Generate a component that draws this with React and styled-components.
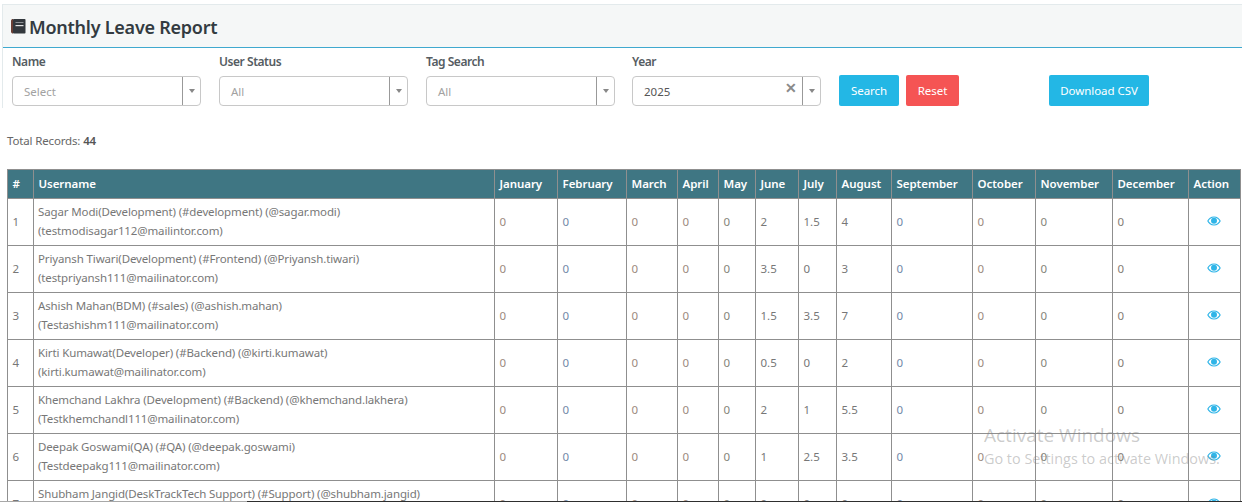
import React from 'react';
import styled, { createGlobalStyle } from 'styled-components';

const Global = createGlobalStyle`
  html, body { margin: 0; padding: 0; background: #fff; overflow: hidden; }
  body { font-family: "Noto Sans", "Open Sans", sans-serif; height: 502px; width: 1242px; }
`;
const Page = styled.div`position: relative; width: 1242px; height: 502px; overflow: hidden; padding-top: 4px; box-sizing: border-box;`;
const Panel = styled.section`margin-left: 2px; border-left: 1px solid #e3eaec; height: 104px;`;
const Heading = styled.header`
  height: 42px; box-sizing: content-box; display: flex; align-items: center; gap: 3px; padding: 0 0 0 7px;
  background: #f5f7f7; border-top: 1px solid #e3eaec; border-bottom: 1px solid #3fa9cf;
`;
const Title = styled.h1`margin: 2px 0 0; font-size: 18px; font-weight: 600; color: #333b41; letter-spacing: -.25px;`;
const Filters = styled.div`display: flex; padding: 5px 0 0 9px; align-items: flex-start;`;
const Field = styled.div`width: 189px; margin-right: ${p => p.$mr ?? 18}px; display: flex; flex-direction: column; gap: 6px;`;
const Label = styled.label`font-size: 12px; font-weight: 600; color: #555c62; line-height: 17px; letter-spacing: -.45px;`;
const SelectBox = styled.div`
  position: relative; height: 30px; border: 1px solid #c8c8c8; border-radius: 4px; box-sizing: border-box;
  display: flex; align-items: center; justify-content: space-between; background: #fff;
`;
const Value = styled.span`padding-left: ${p => p.$pl}px; font-size: 11.5px; color: ${p => p.$dark ? '#555' : '#a2a2a2'};`;
const Right = styled.div`display: flex; align-items: center; height: 100%;`;
const Clear = styled.span`font-size: 14px; color: #8a8a8a; font-weight: 700; line-height: 1; margin: -7px 5px 0 0;`;
const Caret = styled.span`
  width: 17px; height: 100%; border-left: 1px solid #999; display: flex; align-items: center; justify-content: center;
  &::after { content: ''; border: 3.5px solid transparent; border-top: 4px solid #888; border-bottom: 0; }
`;
const Button = styled.button`
  height: 31px; width: ${p => p.$w}px; margin: 22px ${p => p.$mr}px 0 0; border: 0; border-radius: 2px; padding: 0;
  background: ${p => p.$bg}; color: #fff; font: 11.5px "Noto Sans", sans-serif; letter-spacing: -.05px;
`;
const Total = styled.p`margin: 24px 0 0 7px; height: 17px; font-size: 11.5px; line-height: 17px; color: #666; letter-spacing: -.15px; b { font-weight: 600; color: #555; }`;
const Grid = styled.table`
  margin: 20px 0 0 6.5px; width: 1233.5px; border-collapse: collapse; table-layout: fixed; font-size: 11.5px;
  th, td { border: 1px solid #8f8f8f; padding: 0 0 0 5px; text-align: left; box-sizing: border-box; }
`;
const Head = styled.th`background: #3f7683; color: #fff; font-weight: 600; height: 29px; white-space: nowrap; overflow: hidden; letter-spacing: -.05px; && { padding-bottom: 2px; }`;
const Row = styled.tr`height: 47px;`;
const Cell = styled.td`color: ${p => p.$c || '#777'}; && { padding-bottom: 2px; }`;
const UserCell = styled.td`color: #777; line-height: 19px; white-space: nowrap; overflow: hidden; letter-spacing: -.13px; && { padding: 0 0 2px 4.5px; }`;
const ActionCell = styled.td`&& { padding: 0; text-align: center; } svg { display: block; margin: 0 auto; transform: translateY(-1px); }`;
const Watermark = styled.div`
  position: absolute; left: 984px; top: 423px; color: rgba(130,130,130,.42); font-family: "Open Sans", sans-serif; pointer-events: none;
`;
const WmTitle = styled.div`font-size: 19px; line-height: 25px;`;
const WmSub = styled.div`font-size: 14.4px; line-height: 21px; white-space: nowrap;`;
const EdgeLine = styled.div`
  position: absolute; left: 0; right: 0; bottom: 0; height: 1px;
  background: linear-gradient(to right, #a8a8a8 247px, #2e2e2e 247px);
`;

const months = ['January','February','March','April','May','June','July','August','September','October','November','December'];
const widths = [26,461,63,69,51,41,37,43,38,55,81,63,77,76,52.5];
const rows = [
  ['Sagar Modi(Development) (#development) (@sagar.modi)','(testmodisagar112@mailintor.com)',[0,0,0,0,0,2,1.5,4,0,0,0,0]],
  ['Priyansh Tiwari(Development) (#Frontend) (@Priyansh.tiwari)','(testpriyansh111@mailinator.com)',[0,0,0,0,0,3.5,0,3,0,0,0,0]],
  ['Ashish Mahan(BDM) (#sales) (@ashish.mahan)','(Testashishm111@mailinator.com)',[0,0,0,0,0,1.5,3.5,7,0,0,0,0]],
  ['Kirti Kumawat(Developer) (#Backend) (@kirti.kumawat)','(kirti.kumawat@mailinator.com)',[0,0,0,0,0,0.5,0,2,0,0,0,0]],
  ['Khemchand Lakhra (Development) (#Backend) (@khemchand.lakhera)','(Testkhemchandl111@mailinator.com)',[0,0,0,0,0,2,1,5.5,0,0,0,0]],
  ['Deepak Goswami(QA) (#QA) (@deepak.goswami)','(Testdeepakg111@mailinator.com)',[0,0,0,0,0,1,2.5,3.5,0,0,0,0]],
  ['Shubham Jangid(DeskTrackTech Support) (#Support) (@shubham.jangid)','(testshubham111@mailinator.com)',[0,0,0,0,0,0,0,0,0,0,0,0]],
];
const tint = ['#9c8a7e','#7389a8','#9c8a7e','#9c8a7e','#85857a','#777','#777','#777','#7389a8','#9c8a7e','#85857a','#857d75'];

const BookIcon = () => (
  <svg width="16" height="16" viewBox="0 0 16 16">
    <path d="M1 3C1 1.500 2 1 3 1V15.500C2 15.500 1 15 1 13.500Z" fill="#6b3f35" />
    <rect x="3" y="1" width="12.500" height="14.500" rx=".8" fill="#33383d" />
    <rect x="5.500" y="4" width="8" height="1" fill="#8d9094" />
    <rect x="5.500" y="7" width="8" height="1.200" fill="#e4e4e4" />
  </svg>
);
const Eye = () => (
  <svg width="14" height="10" viewBox="0 0 14 10">
    <path fillRule="evenodd" fill="#2fb5e8" d="M7 .5C3.800.5 1.400 2.600.2 5c1.200 2.400 3.600 4.500 6.800 4.500S12.600 7.400 13.800 5C12.600 2.600 10.200.5 7 .5ZM7 1.600C4.700 1.600 2.700 3 1.500 5c1.200 2 3.200 3.400 5.500 3.400S11.300 7 12.500 5C11.300 3 9.300 1.600 7 1.600Z" />
    <circle cx="7" cy="4.800" r="3" fill="#2fb5e8" />
  </svg>
);

export default function App() {
  return (
    <Page>
      <Global />
      <Panel>
        <Heading><BookIcon /><Title>Monthly Leave Report</Title></Heading>
        <Filters>
          <Field><Label>Name</Label><SelectBox><Value $pl={11}>Select</Value><Right><Caret /></Right></SelectBox></Field>
          <Field><Label>User Status</Label><SelectBox><Value $pl={11}>All</Value><Right><Caret /></Right></SelectBox></Field>
          <Field $mr={17}><Label>Tag Search</Label><SelectBox><Value $pl={11}>All</Value><Right><Caret /></Right></SelectBox></Field>
          <Field><Label>Year</Label><SelectBox><Value $pl={11} $dark>2025</Value><Right><Clear>✕</Clear><Caret /></Right></SelectBox></Field>
          <Button $w={60} $mr={7} $bg="#23b7e5">Search</Button>
          <Button $w={53} $mr={90} $bg="#f55454">Reset</Button>
          <Button $w={100} $mr={0} $bg="#23b7e5">Download CSV</Button>
        </Filters>
      </Panel>
      <Total>Total Records: <b>44</b></Total>
      <Grid>
        <colgroup>{widths.map((w, i) => <col key={i} style={{ width: w }} />)}</colgroup>
        <thead>
          <tr><Head>#</Head><Head>Username</Head>{months.map(m => <Head key={m}>{m}</Head>)}<Head>Action</Head></tr>
        </thead>
        <tbody>
          {rows.map((r, i) => (
            <Row key={i}>
              <Cell>{i + 1}</Cell>
              <UserCell>{r[0]}<br />{r[1]}</UserCell>
              {r[2].map((v, j) => <Cell key={j} $c={tint[j]}>{v}</Cell>)}
              <ActionCell><Eye /></ActionCell>
            </Row>
          ))}
        </tbody>
      </Grid>
      <Watermark><WmTitle>Activate Windows</WmTitle><WmSub>Go to Settings to activate Windows.</WmSub></Watermark>
      <EdgeLine />
    </Page>
  );
}
